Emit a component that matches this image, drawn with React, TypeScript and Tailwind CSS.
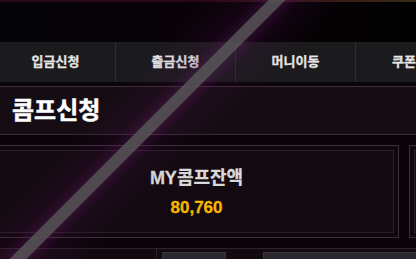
import React from "react";

const font = { fontFamily: '"Liberation Sans", "Noto Sans CJK KR", sans-serif' };

export default function App() {
  const navItems = ["입금신청", "출금신청", "머니이동", "쿠폰신청"];
  return (
    <div
      className="relative w-[416px] h-[259px] overflow-hidden bg-[#0a0408] flex flex-col"
      style={font}
    >
      {/* top strip */}
      <div className="h-[2px] shrink-0 bg-gradient-to-r from-[#2a0816] via-[#2a0816] to-[#3a2a14]" />
      {/* header */}
      <div className="h-[40px] shrink-0 bg-gradient-to-r from-[#040308] via-[#0a0208] to-[#020102]" />
      {/* nav */}
      <div className="h-[40px] shrink-0 flex -ml-[4px] bg-[#1b1a1c]">
        {navItems.map((t, i) => (
          <div
            key={t}
            className={`w-[120px] shrink-0 flex items-center justify-center text-[13px] font-bold text-[#e6e6e6] [-webkit-text-stroke:0.3px_#e6e6e6] ${
              i < navItems.length - 1 ? "border-r border-[#2e2c2f]" : ""
            }`}
          >
            {t}
          </div>
        ))}
      </div>
      {/* gap under nav */}
      <div className="h-[4px] shrink-0 bg-[#0b0408] border-b border-[#3a2d36] box-content" />
      {/* title */}
      <div className="h-[48px] shrink-0 flex items-center pl-[12px] bg-[#150d13] border-b border-[#3a2d36]">
        <span className="text-[24px] font-bold text-white leading-none [-webkit-text-stroke:0.5px_#ffffff]">콤프신청</span>
      </div>
      {/* spacer */}
      <div className="h-[10px] shrink-0 bg-[#0a0408]" />
      {/* cards */}
      <div className="flex shrink-0 -ml-[6px] gap-[10px]">
        <div className="w-[405px] h-[93px] shrink-0 border border-[#3b2f38] p-[4px] bg-[#0e070c]">
          <div className="h-full border border-[#2a2028] bg-[#120a10] flex flex-col items-center justify-center">
            <div className="text-[18px] font-bold text-[#d9d9d9] leading-none mt-[2px] [-webkit-text-stroke:0.3px_#d9d9d9]">MY콤프잔액</div>
            <div className="text-[17px] font-bold text-[#f7b600] leading-none mt-[12px] [-webkit-text-stroke:0.3px_#f7b600]">80,760</div>
          </div>
        </div>
        <div className="w-[100px] h-[93px] shrink-0 border border-[#3b2f38] p-[4px] bg-[#0e070c]">
          <div className="h-full border border-[#2a2028] bg-[#120a10]" />
        </div>
      </div>
      {/* lower area */}
      <div className="h-[10px] shrink-0 bg-[#0c0409]" />
      <div className="flex-1 flex border-t border-[#2e2229] bg-[#120a10]">
        <div className="w-[157px] shrink-0 border-r border-[#2e2229]" />
        <div className="flex gap-[37px] pl-[5px] pt-[3px]">
          <div className="w-[64px] h-[20px] bg-[#29262d] border border-[#3a3640]" />
          <div className="w-[200px] h-[20px] bg-[#29262d] border border-[#3a3640]" />
        </div>
      </div>

      {/* purple glow + diagonal light stripe overlay */}
      <div className="pointer-events-none absolute left-[90px] top-[-113px] w-[100px] h-[500px] rotate-45 bg-gradient-to-r from-transparent via-[#5a165e]/20 to-transparent" />
      <div className="pointer-events-none absolute left-[134px] top-[-113px] w-[12px] h-[500px] rotate-45 bg-[#585658]/85 shadow-[0_0_12px_4px_rgba(110,30,120,0.25)]" />
    </div>
  );
}
